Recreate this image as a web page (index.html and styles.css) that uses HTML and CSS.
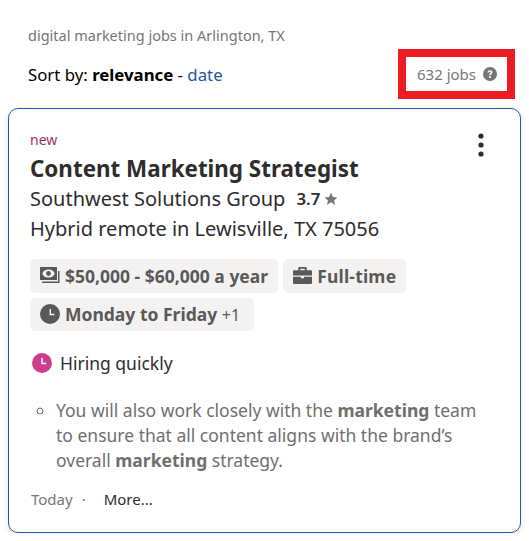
FILE: index.html
```html
<!DOCTYPE html>
<html lang="en">
<head>
    <meta charset="UTF-8">
    <title>Jobs</title>
    <link rel="stylesheet" href="styles.css">
</head>
<body>
    <div class="search_title">digital marketing jobs in Arlington, TX</div>
    <div class="sort_row">
        <div class="sort_by">Sort by: <b>relevance</b> - <a class="date_link">date</a></div>
        <div class="job_count">
            632 jobs
            <svg class="help_icon" viewBox="0 0 14 14" width="14" height="14">
                <circle cx="7" cy="7" r="7" fill="#767676"/>
                <path d="M4.600 5.500c0-1.500 1.100-2.300 2.500-2.300s2.400.8 2.400 2.100c0 1.600-1.700 1.700-1.700 3H6.200c0-2 1.600-2 1.600-3 0-.4-.3-.7-.8-.7s-.8.3-.9.9z" fill="#fff"/>
                <circle cx="6.950" cy="10.100" r="1" fill="#fff"/>
            </svg>
        </div>
    </div>

    <div class="job_card">
        <svg class="menu_dots" viewBox="0 0 6 24" width="6" height="24">
            <circle cx="3" cy="3" r="2.600" fill="#2d2d2d"/>
            <circle cx="3" cy="12" r="2.600" fill="#2d2d2d"/>
            <circle cx="3" cy="21" r="2.600" fill="#2d2d2d"/>
        </svg>
        <div class="new_label">new</div>
        <h2 class="job_title">Content Marketing Strategist</h2>
        <div class="company">
            Southwest Solutions Group
            <b class="rating">3.7</b>
            <svg class="star" viewBox="0 0 14 14" width="14" height="14">
                <path d="M7 .8l1.900 4.100 4.500.5-3.300 3.100.9 4.500L7 10.300l-4 2.700.9-4.500L.6 5.400l4.500-.5z" fill="#767676"/>
            </svg>
        </div>
        <div class="location">Hybrid remote in Lewisville, TX 75056</div>

        <div class="tags">
            <div class="tag">
                <svg class="tag_icon" viewBox="0 0 20 18" width="20" height="18">
                    <path d="M0 0h17v13H0z" fill="#595959"/>
                    <ellipse cx="8.500" cy="6.500" rx="6" ry="4" fill="#f3f2f1"/>
                    <circle cx="8.500" cy="6.500" r="2.400" fill="#595959"/>
                    <path d="M18 4h1.500v12H2v-1.500h16z" fill="#595959"/>
                </svg>
                $50,000 - $60,000 a year
            </div>
            <div class="tag">
                <svg class="tag_icon" viewBox="0 0 18 16" width="19" height="17">
                    <path d="M6 0h6a1 1 0 0 1 1 1v2h4a1 1 0 0 1 1 1v4H0V4a1 1 0 0 1 1-1h4V1a1 1 0 0 1 1-1zm.800 1.500V3h4.400V1.500z" fill="#595959" fill-rule="evenodd"/>
                    <path d="M0 9.200h7.500v1.500h3V9.200H18V15a1 1 0 0 1-1 1H1a1 1 0 0 1-1-1z" fill="#595959"/>
                </svg>
                <span class="tag_wide">Full-time</span>
            </div>
            <div class="tag">
                <svg class="tag_icon" viewBox="0 0 18 18" width="20" height="20">
                    <circle cx="9" cy="9" r="9" fill="#595959"/>
                    <path d="M8.600 4.500h1.300v4.300h3v1.300H8.600z" fill="#f3f2f1"/>
                </svg>
                <span>Monday to Friday <span class="tag_more">+1</span></span>
            </div>
        </div>

        <div class="hiring">
            <svg viewBox="0 0 20 20" width="20" height="20">
                <circle cx="10" cy="10" r="10" fill="#cd3f8c"/>
                <path d="M9.300 5h1.500v4.800h3.400v1.500H9.300z" fill="#fff"/>
            </svg>
            Hiring quickly
        </div>

        <ul class="snippet">
            <li>You will also work closely with the <b>marketing</b> team to ensure that all content aligns with the brand’s overall <b>marketing</b> strategy.</li>
        </ul>

        <div class="card_footer">
            <span class="posted">Today</span>
            <span class="sep">·</span>
            <span class="more">More...</span>
        </div>
    </div>
</body>
</html>
```

FILE: styles.css
```css
body {
    margin: 0;
    padding: 0 8px;
    background-color: #fff;
    font-family: "Noto Sans", sans-serif;
    color: #2d2d2d;
}

.search_title {
    padding: 25px 0 0 20px;
    font-size: 14.5px;
    line-height: 20px;
    color: #767676;
}

.sort_row {
    display: flex;
    justify-content: space-between;
    align-items: center;
    height: 50px;
    margin: 4px 6px 9px 0;
}

.sort_by {
    padding-left: 20px;
    font-size: 16.8px;
    color: #000;
}

.date_link {
    color: #2557a7;
}

.job_count {
    display: flex;
    align-items: center;
    justify-content: space-between;
    box-sizing: border-box;
    width: 117px;
    height: 50px;
    padding: 0 10px 0 11px;
    border: 8px solid #ed1c24;
    font-size: 15px;
    color: #767676;
}

.job_card {
    position: relative;
    box-sizing: border-box;
    height: 425px;
    padding: 22px 21px 0 21px;
    border: 1px solid #2557a7;
    border-radius: 10px;
    box-shadow: 0 2px 6px rgba(0, 0, 0, 0.1);
}

.menu_dots {
    position: absolute;
    top: 24px;
    right: 36px;
}

.new_label {
    font-size: 14px;
    line-height: 18px;
    color: #a0345f;
}

.job_title {
    margin: 5px 0 0;
    font-size: 22.4px;
    line-height: 30px;
    font-weight: 700;
    color: #2d2d2d;
}

.company {
    display: flex;
    align-items: center;
    font-size: 20px;
    line-height: 30px;
}

.rating {
    margin: 0 4px 0 11px;
    font-size: 16.8px;
    font-weight: 600;
}

.location {
    font-size: 20px;
    line-height: 30px;
}

.tags {
    display: flex;
    flex-wrap: wrap;
    gap: 5px;
    margin-top: 15px;
}

.tag {
    display: flex;
    align-items: center;
    gap: 5px;
    height: 33.5px;
    padding: 0 10px;
    border-radius: 5px;
    background-color: #f3f2f1;
    font-size: 17.5px;
    font-weight: 700;
    color: #595959;
}

.tag_wide {
    letter-spacing: 0.2px;
}

.tag_more {
    margin-right: 4px;
    font-size: 16px;
    font-weight: 400;
}

.hiring {
    display: flex;
    align-items: center;
    gap: 8px;
    margin: 20px 0 0 2px;
    font-size: 17.5px;
    line-height: 24px;
}

.snippet {
    margin: 23px 0 0;
    padding: 0 20px 0 26px;
    list-style-type: circle;
    font-size: 17.5px;
    line-height: 25px;
    color: #6f6f6f;
}

.card_footer {
    display: flex;
    margin-top: 16px;
    margin-left: 1px;
    font-size: 15px;
    line-height: 20px;
}

.posted {
    color: #767676;
}

.sep {
    margin: 0 18px 0 9px;
    color: #767676;
}

.more {
    color: #2d2d2d;
}
```
